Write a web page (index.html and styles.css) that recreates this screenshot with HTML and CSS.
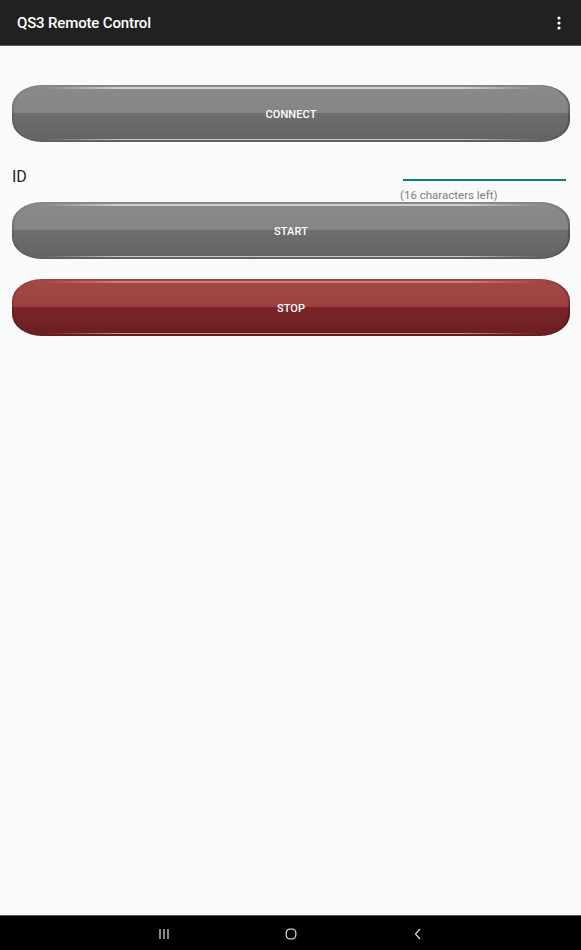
FILE: index.html
```html
<!DOCTYPE html>
<html>
<head>
<meta charset="utf-8">
<link rel="stylesheet" href="styles.css">
</head>
<body>
<div class="screen">
  <header class="appbar">
    <span class="title">QS3 Remote Control</span>
    <svg class="overflow" width="4" height="14" viewBox="0 0 4 14">
      <circle cx="2" cy="2" r="1.6" fill="#fff"/>
      <circle cx="2" cy="7" r="1.6" fill="#fff"/>
      <circle cx="2" cy="12" r="1.6" fill="#fff"/>
    </svg>
  </header>
  <main class="content">
    <button class="btn gray connect">CONNECT</button>
    <div class="id-row">
      <span class="id-label">ID</span>
      <div class="field">
        <div class="underline"></div>
        <span class="counter">(16 characters left)</span>
      </div>
    </div>
    <button class="btn gray start">START</button>
    <button class="btn red stop">STOP</button>
  </main>
  <nav class="navbar">
    <svg width="12" height="12" viewBox="0 0 12 12"><path d="M2 1v10M6 1v10M10 1v10" stroke="#cfcfcf" stroke-width="1.3" fill="none"/></svg>
    <svg width="12" height="12" viewBox="0 0 12 12"><rect x="1.2" y="1.2" width="9.6" height="9.6" rx="3.5" stroke="#cfcfcf" stroke-width="1.3" fill="none"/></svg>
    <svg width="12" height="12" viewBox="0 0 12 12"><path d="M8 1L3.5 6L8 11" stroke="#cfcfcf" stroke-width="1.3" fill="none"/></svg>
  </nav>
</div>
</body>
</html>
```
FILE: styles.css
```css
* { box-sizing: border-box; }
html, body { margin: 0; padding: 0; }
body { background: #fafafa; font-family: Roboto, "Noto Sans", sans-serif; }
.screen { width: 581px; height: 950px; display: flex; flex-direction: column; background: #fafafa; }
.appbar {
  height: 46px; background: #212121; border-bottom: 1px solid #5a5a5a;
  display: flex; align-items: center; justify-content: space-between;
  padding: 0 20px 0 17px; flex: none;
}
.title { color: #fff; font-size: 15px; font-weight: 500; letter-spacing: -0.15px; }
.overflow { display: block; margin-top: 1px; }
.content { flex: 1; padding: 39px 11px 0 12px; display: flex; flex-direction: column; }
.btn {
  position: relative; display: block; width: 558px; height: 57px; border: 0; padding: 2px 0 0;
  border-radius: 30px / 22px;
  color: #fff; font-family: Roboto, sans-serif; font-size: 11px; font-weight: 500;
  letter-spacing: 0.1px; text-align: center; cursor: pointer;
}
.btn::before, .btn::after {
  content: ""; position: absolute; left: 32px; right: 32px; height: 1.5px; border-radius: 1px;
}
.btn::before { top: 2px; }
.btn::after { bottom: 2px; }
.gray {
  background: linear-gradient(to bottom, #8a8a8a 0%, #858585 48%, #6e6e6e 50%, #636363 100%);
  box-shadow: inset -2px 0 1px rgba(0,0,0,0.25), inset 2px 0 1px rgba(0,0,0,0.12);
}
.gray::before { background: linear-gradient(to right, rgba(220,220,220,0), #cfcfcf 15%, #cfcfcf 85%, rgba(220,220,220,0)); }
.gray::after { background: linear-gradient(to right, rgba(220,220,220,0), #c8c8c8 15%, #c8c8c8 85%, rgba(220,220,220,0)); }
.red {
  background: linear-gradient(to bottom, #a34747 0%, #9c4040 48%, #7c2428 50%, #6a1e22 100%);
  box-shadow: inset -2px 0 1px rgba(0,0,0,0.25), inset 2px 0 1px rgba(0,0,0,0.12);
}
.red::before { background: linear-gradient(to right, rgba(230,170,170,0), #c98080 15%, #c98080 85%, rgba(230,170,170,0)); }
.red::after { background: linear-gradient(to right, rgba(230,170,170,0), #d09090 15%, #d09090 85%, rgba(230,170,170,0)); }
.id-row { display: flex; justify-content: space-between; height: 60px; }
.id-label { font-size: 16px; color: #222; margin-top: 25px; }
.field { width: 166px; display: flex; flex-direction: column; margin-right: 4px; }
.underline { height: 2px; background: #00857a; margin-top: 37px; margin-left: 3px; }
.counter { font-size: 11.5px; color: #7e7e7e; margin-top: 7px; line-height: 14px; }
.start { margin-top: 0; }
.stop { margin-top: 20px; }
.navbar {
  height: 35px; background: #000; border-top: 1px solid #555; flex: none;
  display: flex; align-items: center; justify-content: center; gap: 115px; padding-top: 2px;
}
.navbar svg { display: block; }
```
